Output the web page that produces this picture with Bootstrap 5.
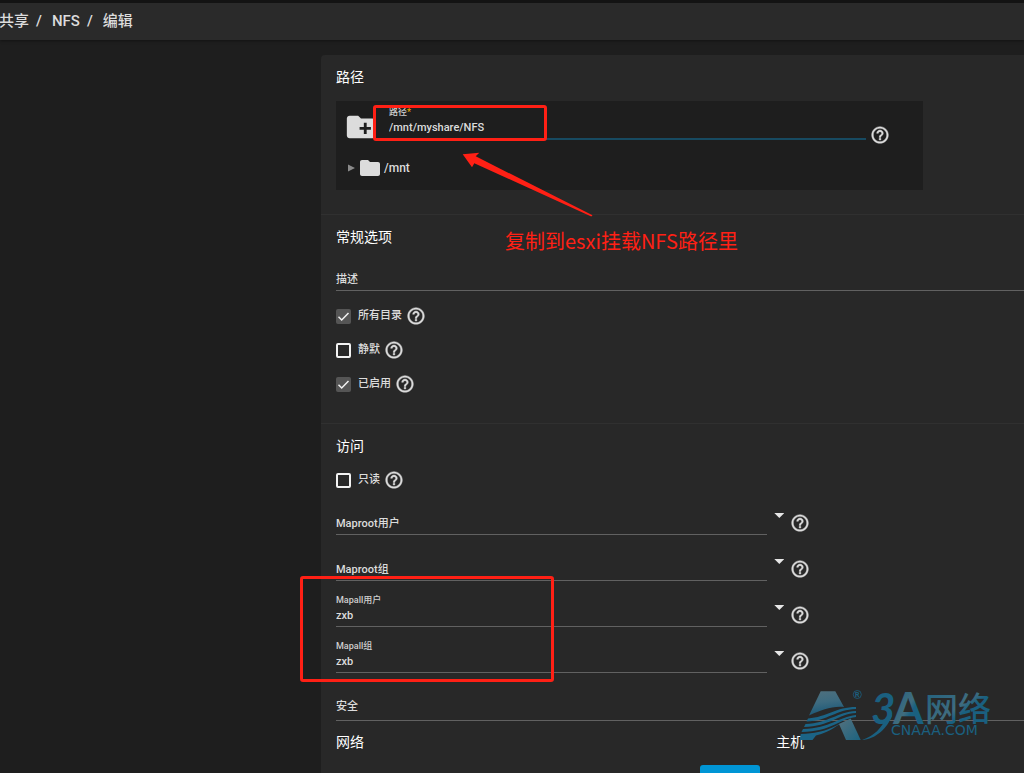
<!DOCTYPE html>
<html lang="zh-CN" data-bs-theme="dark">
<head>
<meta charset="utf-8">
<meta name="viewport" content="width=device-width, initial-scale=1">
<title>编辑 NFS</title>
<link href="https://cdn.jsdelivr.net/npm/bootstrap@5.3.0/dist/css/bootstrap.min.css" rel="stylesheet">
<style>
  body { background: #1e1e1e; color: #dcdcdc; font: 12px/20px Roboto, "Noto Sans CJK SC", sans-serif; }
  .topbar { background: #2a2a2a; border-top: 3px solid #131313; height: 40px; padding-bottom: 1px; box-shadow: 0 1px 3px #0006; flex: none; }
  .crumbs { font-size: 15px; font-weight: 500; margin-left: -1px; }
  .crumbs .breadcrumb-item + .breadcrumb-item { padding-left: 7px; }
  .crumbs .breadcrumb-item + .breadcrumb-item::before { content: "/"; color: #dcdcdc; padding-right: 10px; }
  .crumbs a { color: inherit; }
  .panel { background: #282828; margin: 15px 0 0 321px; border-top-left-radius: 4px; }
  .section { padding: 12px 0 24px 15px; border-bottom: 1px solid #303030; }
  .section-title { font-size: 14px; line-height: 20px; font-weight: 400; margin: 0; }
  .pathbox { background: #1e1e1e; width: 85%; min-width: 587px; margin-top: 14px; padding: 5px 33px 10px 8px; }
  .field { display: flex; flex-direction: column; justify-content: flex-end; min-height: 40px; border-bottom: 1px solid #616161; font-size: 11px; font-weight: 500; }
  .field-active { min-height: 34px; padding-bottom: 1px; border-color: #174a61; border-bottom-width: 2px; }
  .field-tall { padding-bottom: 3px; }
  .tiny { font-size: 9px; line-height: 12px; color: #cfcfcf; }
  .star { color: #e8a800; }
  .slot { display: grid; }
  .slot > * { grid-area: 1 / 1; height: 20px; }
  .plain { background: transparent; border: 0; padding: 0; width: 100%; height: 20px; color: inherit; font: inherit; line-height: 20px; outline: 0; appearance: none; }
  .field-active .plain { height: 19px; }
  .help { width: 20px; height: 20px; flex: none; fill: #dcdcdc; }
  .tick-row { height: 24px; display: flex; align-items: center; font-size: 11px; font-weight: 500; }
  .tick-row label { padding: 0 4px 0 7px; }
  .tick { appearance: none; margin: 0; width: 15px; height: 15px; border: 2px solid #f2f2f2; border-radius: 2px; flex: none; }
  .tick:checked { border: 0; background: #555 url("data:image/svg+xml,%3Csvg xmlns='http://www.w3.org/2000/svg' viewBox='0 0 15 15'%3E%3Cpath d='M2.5 7.8l3.2 3.2 6.8-7' fill='none' stroke='%23f2f2f2' stroke-width='1.5'/%3E%3C/svg%3E"); }
  .ticks { display: grid; gap: 10px; margin: 13px 0 3px; }
  .half { width: 64%; flex: none; }
  .combo { display: flex; margin-bottom: 6px; width: calc(64% + 34px); }
  .combo .field { flex: 1; }
  .caret { width: 10px; height: 5px; margin: 18px 6px 0 7px; padding: 0; border: 0; flex: none; background: #e6e6e6; clip-path: polygon(0 0, 100% 0, 50% 100%); }
  .combo .help { margin-top: 18px; }
  .add-btn { width: 60px; height: 28px; background: #0095d5; border: 0; border-radius: 3px; padding: 0; }
  .mark-box { position: absolute; border: 3px solid #ff2015; border-radius: 3px; pointer-events: none; }
  .mark-path { left: 37px; top: 4px; width: 174px; height: 36px; }
  .mark-map { left: -21px; top: 152px; width: 254px; height: 106px; }
  .mark-arrow { position: absolute; left: 126px; top: 51px; pointer-events: none; z-index: 2; }
  .mark-note { position: absolute; left: 184px; top: 12px; font: 20px/28px "Noto Sans CJK SC", sans-serif; color: #ff2015; white-space: nowrap; }
  .watermark { position: absolute; right: 30px; bottom: 29px; pointer-events: none; }
</style>
</head>
<body>
<div class="vh-100 d-flex flex-column overflow-hidden position-relative">
  <nav class="topbar d-flex align-items-center" aria-label="导航">
    <ol class="breadcrumb crumbs mb-0">
      <li class="breadcrumb-item"><a class="text-decoration-none" href="#">共享</a></li>
      <li class="breadcrumb-item"><a class="text-decoration-none" href="#">NFS</a></li>
      <li class="breadcrumb-item">编辑</li>
    </ol>
  </nav>

  <svg class="d-none">
    <symbol id="help" viewBox="0 0 24 24"><path stroke="#dcdcdc" stroke-width=".5" d="M11 18h2v-2h-2v2zm1-16C6.480 2 2 6.480 2 12s4.480 10 10 10 10-4.480 10-10S17.520 2 12 2zm0 18c-4.410 0-8-3.590-8-8s3.590-8 8-8 8 3.590 8 8-3.590 8-8 8zm0-14c-2.210 0-4 1.790-4 4h2c0-1.100.9-2 2-2s2 .9 2 2c0 2-3 1.750-3 5h2c0-2.250 3-2.500 3-5 0-2.210-1.790-4-4-4z"/></symbol>
  </svg>

  <form class="panel flex-grow-1">
    <section class="section">
      <h2 class="section-title">路径</h2>
      <div class="pathbox position-relative">
        <div class="d-flex align-items-start">
          <svg width="34" height="34" viewBox="0 0 24 24" fill="#dcdcdc" style="margin:4px 11px 0 0"><path d="M20 6h-8l-2-2H4c-1.110 0-1.990.89-1.990 2L2 18c0 1.110.89 2 2 2h16c1.110 0 2-.89 2-2V8c0-1.110-.89-2-2-2zm-1 8h-3v3h-2v-3h-3v-2h3V9h2v3h3v2z"/></svg>
          <div class="field field-active flex-grow-1">
            <label class="tiny" for="path">路径<span class="star">*</span></label>
            <input class="plain" id="path" type="text" value="/mnt/myshare/NFS">
          </div>
          <svg class="help ms-1" style="margin-top:19px"><use href="#help"/></svg>
        </div>
        <div class="d-flex align-items-center fw-medium" style="margin-top:11px;height:24px">
          <svg class="ms-1" width="8" height="8" viewBox="0 0 8 8"><path d="M0 .5l7 3.500-7 3.500z" fill="#8a8a8a"/></svg>
          <svg class="ms-0" width="28" height="24" viewBox="-1 0 26 24" fill="#dcdcdc"><path d="M10 4H4c-1.100 0-1.990.9-1.990 2L2 18c0 1.100.9 2 2 2h16c1.100 0 2-.9 2-2V8c0-1.100-.9-2-2-2h-8l-2-2z"/></svg>
          <span>/mnt</span>
        </div>
        <div class="mark-box mark-path"></div>
        <svg class="mark-arrow" width="132" height="66" viewBox="0 0 132 66" fill="#ff2015"><path d="M.7 2.300L17.300.7l-3.600 3.600L130.500 63.300l-1.200 1.200L12.300 11.300 10 15.300z"/></svg>
      </div>
    </section>

    <section class="section position-relative">
      <h2 class="section-title">常规选项</h2>
      <div class="mark-note">复制到esxi挂载NFS路径里</div>
      <div class="field mt-1">
        <div class="slot"><label for="desc">描述</label><input class="plain" id="desc" type="text"></div>
      </div>
      <div class="ticks">
        <div class="tick-row"><input class="tick" type="checkbox" id="alldirs" checked><label for="alldirs">所有目录</label><svg class="help"><use href="#help"/></svg></div>
        <div class="tick-row"><input class="tick" type="checkbox" id="quiet"><label for="quiet">静默</label><svg class="help"><use href="#help"/></svg></div>
        <div class="tick-row"><input class="tick" type="checkbox" id="enabled" checked><label for="enabled">已启用</label><svg class="help"><use href="#help"/></svg></div>
      </div>
    </section>

    <section class="section position-relative border-0">
      <h2 class="section-title">访问</h2>
      <div class="tick-row" style="margin:12px 0 3px"><input class="tick" type="checkbox" id="ro"><label for="ro">只读</label><svg class="help"><use href="#help"/></svg></div>
      <div class="combo">
        <div class="field"><div class="slot"><label for="mru">Maproot用户</label><input class="plain" id="mru" type="text"></div></div>
        <button class="caret" type="button" aria-label="展开"></button><svg class="help"><use href="#help"/></svg>
      </div>
      <div class="combo">
        <div class="field"><div class="slot"><label for="mrg">Maproot组</label><input class="plain" id="mrg" type="text"></div></div>
        <button class="caret" type="button" aria-label="展开"></button><svg class="help"><use href="#help"/></svg>
      </div>
      <div class="combo">
        <div class="field"><label class="tiny" for="mau">Mapall用户</label><input class="plain" id="mau" type="text" value="zxb"></div>
        <button class="caret" type="button" aria-label="展开"></button><svg class="help"><use href="#help"/></svg>
      </div>
      <div class="combo">
        <div class="field"><label class="tiny" for="mag">Mapall组</label><input class="plain" id="mag" type="text" value="zxb"></div>
        <button class="caret" type="button" aria-label="展开"></button><svg class="help"><use href="#help"/></svg>
      </div>
      <div class="field field-tall mt-2">
        <div class="slot"><label for="sec">安全</label><select class="plain" id="sec"><option value=""></option></select></div>
      </div>
      <div class="d-flex" style="margin-top:11px">
        <div class="half">
          <h2 class="section-title">网络</h2>
          <div class="text-end" style="margin-top:13px;padding-right:16px"><button class="add-btn" type="button" aria-label="添加"></button></div>
        </div>
        <div class="flex-grow-1"><h2 class="section-title">主机</h2></div>
      </div>
      <div class="mark-box mark-map"></div>
    </section>
  </form>

  <svg class="watermark" width="194" height="54" viewBox="0 0 194 54" role="img" aria-label="3A网络" overflow="visible">
    <defs>
      <linearGradient id="cap" x1="0" y1="0" x2="0.200" y2="1"><stop offset="0" stop-color="#4f707e"/><stop offset=".5" stop-color="#3d6b80"/><stop offset="1" stop-color="#1b5877"/></linearGradient>
      <linearGradient id="leg" x1="0" y1="0" x2="1" y2="1"><stop offset="0" stop-color="#55717d"/><stop offset="1" stop-color="#1b6380"/></linearGradient>
      <linearGradient id="ink" x1="0" y1="0" x2="1" y2="1"><stop offset="0" stop-color="#1a6080"/><stop offset=".5" stop-color="#406c7e"/><stop offset=".6" stop-color="#1a6080"/></linearGradient>
    </defs>
    <path fill="url(#cap)" d="M20.700 1.300H35.300L44 17c-13-1-22 3-35 8.500z"/>
    <g fill="#1b6486">
      <path d="M56 17C36 17 27 27 8 28.500L6.500 31.500C28 31 36 19.500 56 19z"/>
      <path d="M56 21C37 22 29 33 5.500 34L4 37C30 36.500 38 24 56 23z"/>
      <path d="M56 25C38 27 31 38 3 39L1.500 42C32 41.500 39 29 56 27z"/>
      <path d="M47 30.500C35 35 29 43 .8 44L-.5 50H12.500L16 45.500C31 42 36 35 47 30.500z"/>
    </g>
    <path fill="url(#leg)" d="M39 34l11.700-5.500L60.700 50H46z"/>
    <circle cx="57.300" cy="4.500" r="4" fill="none" stroke="#1b6080" stroke-width=".8"/>
    <text x="57.300" y="7" text-anchor="middle" font-family="Roboto, sans-serif" font-size="7" font-weight="700" fill="#1b6080">R</text>
    <path fill="#1a6080" d="M62 50C76 49 88 38 92 25L86 27C82 38 74 46 62 50z"/>
    <text x="71" y="34" font-family="Lato, sans-serif" font-style="italic" font-weight="700" font-size="42" fill="#1a6080">3</text>
    <text x="93" y="34" font-family="Lato, sans-serif" font-weight="700" font-size="44" fill="url(#ink)">A</text>
    <text x="125" y="31" font-family="'Noto Sans CJK SC', sans-serif" font-weight="500" font-size="33" fill="url(#ink)">网络</text>
    <text x="91" y="45" font-family="'DejaVu Sans', sans-serif" font-size="14" fill="#1a6080">CNAAA.COM</text>
  </svg>
</div>
<script src="https://cdn.jsdelivr.net/npm/bootstrap@5.3.0/dist/js/bootstrap.bundle.min.js"></script>
</body>
</html>
